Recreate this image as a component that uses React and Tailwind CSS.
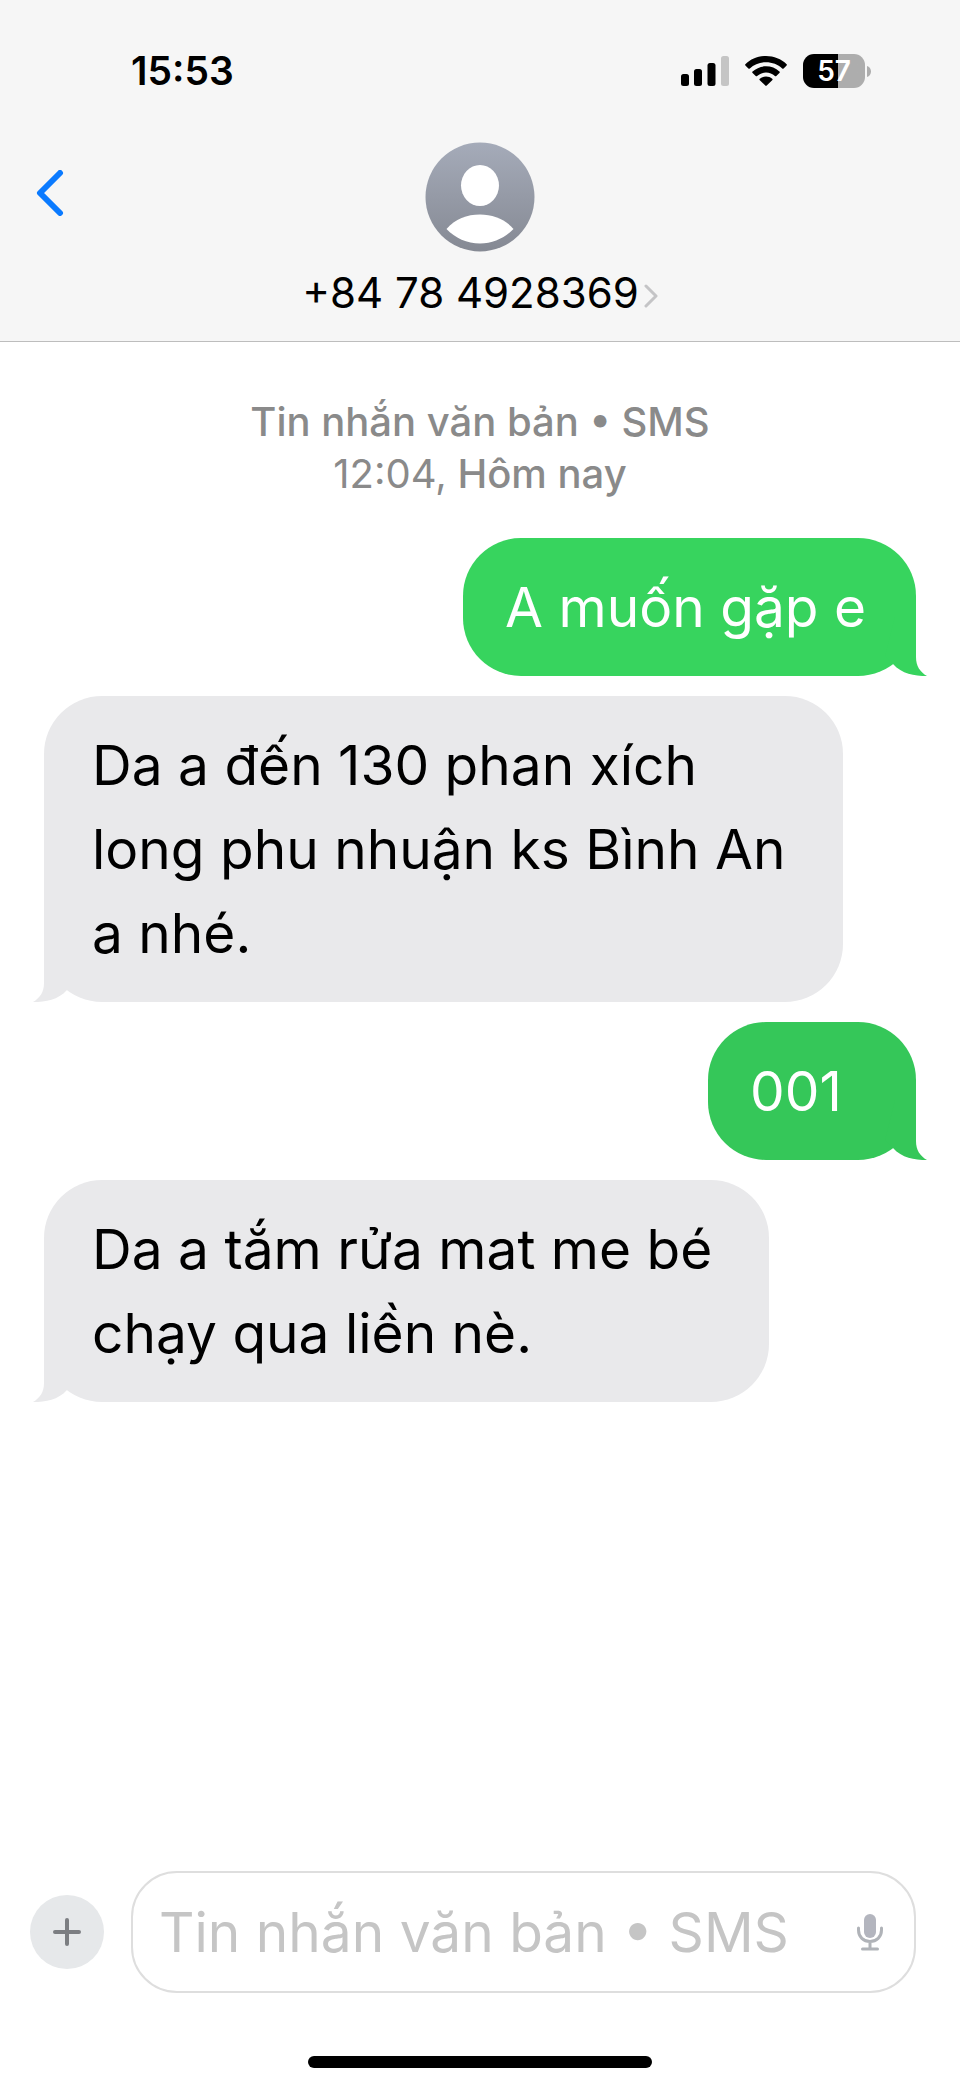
import { useState } from 'react';

const messages = [
    { id: 1, sent: true, color: 'bg-[#37d45e] text-[#37d45e]', text: ['A muốn gặp e'] },
    { id: 2, sent: false, color: 'bg-[#e9e9eb] text-[#e9e9eb]', text: ['Da a đến 130 phan xích', 'long phu nhuận ks Bình An', 'a nhé.'] },
    { id: 3, sent: true, color: 'bg-[#35c759] text-[#35c759]', text: ['001'] },
    { id: 4, sent: false, color: 'bg-[#e9e9eb] text-[#e9e9eb]', text: ['Da a tắm rửa mat me bé', 'chạy qua liền nè.'] },
];

function StatusBar() {
    return (
        <div className="flex items-center justify-between pl-[131px] pr-[89px] h-[36px]">
            <time className="text-[39px] leading-[36px] font-semibold">15:53</time>

            <div className="flex items-center">
                <svg width="48" height="30" viewBox="0 0 48 30" aria-label="Signal">
                    <rect x="0" y="18" width="8" height="12" rx="2.5" />
                    <rect x="13" y="13" width="8" height="17" rx="2.5" />
                    <rect x="26.500" y="7" width="8" height="23" rx="2.5" />
                    <rect x="40" y="0" width="8" height="30" rx="2.5" fill="#c5c5c5" />
                </svg>

                <svg className="ml-4" width="42" height="30" viewBox="0 0 42 30" aria-label="Wi-Fi">
                    <path d="M21 0C13 0 5.700 3 .4 8.200a.9.9 0 0 0 0 1.300l3 3a1 1 0 0 0 1.400 0C9.100 8.400 14.800 6.200 21 6.200s11.900 2.200 16.200 6.300a1 1 0 0 0 1.400 0l3-3a.9.9 0 0 0 0-1.300C36.300 3 29 0 21 0Z" />
                    <path d="M21 10.300c-5.100 0-9.800 1.900-13.400 5.200a.9.9 0 0 0 0 1.400l3.100 3.100a1 1 0 0 0 1.400 0c2.400-2.200 5.500-3.500 8.900-3.500s6.500 1.300 8.900 3.500a1 1 0 0 0 1.400 0l3.100-3.100a.9.9 0 0 0 0-1.400C30.800 12.200 26.100 10.300 21 10.300Z" />
                    <path d="M21 20.600c-2.400 0-4.500.8-6.200 2.200a.9.9 0 0 0 0 1.400l5.500 5.400a1 1 0 0 0 1.400 0l5.500-5.400a.9.9 0 0 0 0-1.400c-1.700-1.400-3.800-2.200-6.200-2.200Z" />
                </svg>

                <div className="ml-4 flex items-center gap-[2px]">
                    <div className="flex h-[34px] w-[62px] items-center justify-center rounded-[11px] bg-linear-to-r from-black from-57% to-[#adadad] to-57% text-[28px] leading-none font-semibold text-white">
                        57
                    </div>
                    <svg width="4" height="11" viewBox="0 0 4 11">
                        <path d="M0 0C2.500 .8 4 3 4 5.500S2.500 10.200 0 11Z" fill="#adadad" />
                    </svg>
                </div>
            </div>
        </div>
    );
}

function Avatar() {
    return (
        <svg width="110" height="110" viewBox="0 0 110 110">
            <defs>
                <linearGradient id="avatarFill" x1="0" y1="0" x2="0" y2="1">
                    <stop offset="0" stopColor="#a5abb9" />
                    <stop offset="1" stopColor="#858993" />
                </linearGradient>
            </defs>
            <circle cx="55" cy="55" r="54.500" fill="url(#avatarFill)" />
            <ellipse cx="55" cy="43.500" rx="19" ry="20.500" fill="#fff" />
            <path d="M21.500 87C30 77 42 72.500 55 72.500S80 77 88.500 87C80 96 68 101.500 55 101.500S30 96 21.500 87Z" fill="#fff" />
        </svg>
    );
}

function Bubble({ message }) {
    const { sent, color, text } = message;

    return (
        <div className={`relative min-w-[208px] rounded-[58px] py-[27px] ${sent ? 'self-end pl-[42px] pr-[50px]' : 'self-start pl-[48px] pr-[57px]'} ${color}`}>
            <p className={`text-[55px] leading-[84px] ${sent ? 'text-white' : 'text-black'}`}>
                {text.map((line) => (
                    <span key={line} className="block">{line}</span>
                ))}
            </p>
            <svg
                className={`absolute bottom-0 ${sent ? '-right-[11px]' : '-left-[11px] -scale-x-100'}`}
                width="42"
                height="60"
                viewBox="0 0 42 60"
                fill="currentColor"
            >
                <path d="M31 0V41C31 50 35 56 42 60C29 60 17 58 8 48L0 40L10 0Z" />
            </svg>
        </div>
    );
}

export default function App() {
    const [draft, setDraft] = useState('');

    return (
        <div className="flex min-h-screen flex-col bg-white font-['Inter',sans-serif] text-black">
            <header className="border-b border-[#bdbdbd] bg-[#f6f6f6] pt-[53px] pb-[22px]">
                <StatusBar />

                <div className="mt-[53px] grid grid-cols-[1fr_auto_1fr]">
                    <button type="button" aria-label="Back" className="ml-[36px] mt-[28px] cursor-pointer self-start justify-self-start">
                        <svg width="28" height="46" viewBox="0 0 28 46" fill="none" stroke="#0a7aff" strokeWidth="6" strokeLinecap="round" strokeLinejoin="round">
                            <path d="M24 3L4 23L24 43" />
                        </svg>
                    </button>

                    <button type="button" className="flex cursor-pointer flex-col items-center">
                        <Avatar />
                        <span className="mt-[15px] flex items-center text-[42px] leading-[52px]">
                            +84 78 4928369
                            <svg className="ml-[5px] mt-[6px]" width="14" height="24" viewBox="0 0 14 24" fill="none" stroke="#c4c4c6" strokeWidth="3" strokeLinecap="round" strokeLinejoin="round">
                                <path d="M2 2L12 12L2 22" />
                            </svg>
                        </span>
                    </button>
                </div>
            </header>

            <main className="flex flex-1 flex-col px-[44px] pt-[54px]">
                <p className="text-center text-[40px] leading-[52px] font-medium text-[#8a8a8a]">
                    Tin nhắn văn bản • SMS
                    <br />
                    <span className="font-normal">12:04,</span> Hôm nay
                </p>

                <div className="mt-[38px] flex flex-col gap-5">
                    {messages.map((message) => (
                        <Bubble key={message.id} message={message} />
                    ))}
                </div>
            </main>

            <footer className="pb-[17px]">
                <div className="flex items-center gap-[27px] pl-[30px] pr-[44px]">
                    <button type="button" aria-label="Add" className="flex size-[74px] shrink-0 cursor-pointer items-center justify-center rounded-full bg-[#e6e8ea]">
                        <svg width="30" height="30" viewBox="0 0 30 30" stroke="#7c7e82" strokeWidth="4" strokeLinecap="round">
                            <path d="M15 3V27M3 15H27" />
                        </svg>
                    </button>

                    <div className="flex h-[122px] min-w-0 flex-1 items-center rounded-[46px] border-2 border-[#dedede] pl-[26px] pr-[30px]">
                        <input
                            type="text"
                            aria-label="Tin nhắn"
                            value={draft}
                            onChange={(e) => setDraft(e.target.value)}
                            placeholder="Tin nhắn văn bản • SMS"
                            className="h-[84px] min-w-0 flex-1 text-[55px] outline-none placeholder:text-[#c5c5c5]"
                        />
                        <button type="button" aria-label="Dictate" className="cursor-pointer">
                            <svg width="28" height="38" viewBox="0 0 28 38" fill="none" stroke="#b0b3b8" strokeWidth="3" strokeLinecap="round">
                                <rect x="8" y="1" width="12" height="24" rx="6" fill="#b3b5be" stroke="none" />
                                <path d="M2.500 15V17C2.500 24 7.500 28.500 14 28.500S25.500 24 25.500 17V15M14 29V36M6.500 36H21.500" />
                            </svg>
                        </button>
                    </div>
                </div>

                <div className="mx-auto mt-[63px] h-[12px] w-[344px] rounded-full bg-black" />
            </footer>
        </div>
    );
}
